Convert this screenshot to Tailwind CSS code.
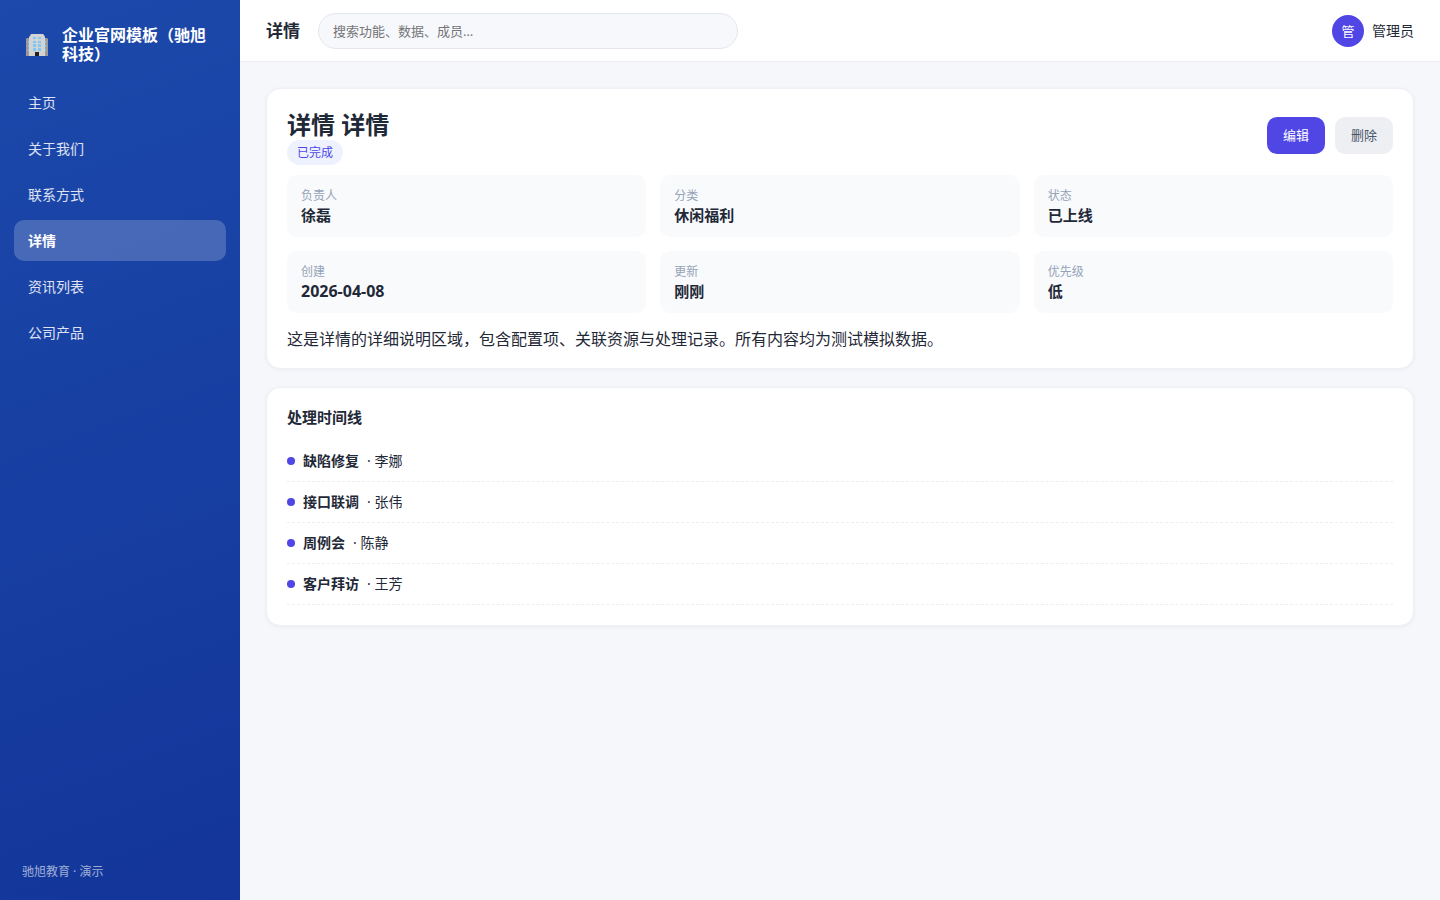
<!DOCTYPE html>
<html lang="zh-CN">
<head>
<meta charset="utf-8">
<meta name="viewport" content="width=device-width, initial-scale=1">
<title>详情</title>
<script src="https://cdn.jsdelivr.net/npm/@tailwindcss/browser@4"></script>
</head>
<body class="flex min-h-screen bg-[#f5f7fb] font-['Noto_Sans','Noto_Sans_CJK_SC',sans-serif] text-sm text-[#1f2937]">
  <aside class="flex w-60 shrink-0 flex-col bg-linear-[160deg,#1c49ab,#13359a] px-[14px] pt-[26px] pb-[18px] text-white">
    <div class="flex items-center gap-[14px] px-3">
      <svg class="size-[22px] shrink-0" viewBox="0 0 22 22" aria-hidden="true">
        <path fill="#9b9b9b" d="M0 5l1-1h20l1 1v17H0z"/>
        <path fill="#7ec8f8" d="M2 7h1v2H2zM2 11h1v2H2zM2 15h1v2H2zM19 7h1v2h-1zM19 11h1v2h-1zM19 15h1v2h-1z"/>
        <path fill="#d3d3d3" d="M3 3l1-1 1-2h12l1 1 1 2v19H3z"/>
        <path fill="#7ec8f8" d="M7 3h3v2H7zM12 3h3v2h-3zM7 7h3v2H7zM12 7h3v2h-3zM7 10h3v3H7zM12 10h3v3h-3zM7 14h3v3H7zM12 14h3v3h-3z"/>
        <path fill="#212121" d="M9 18h4v4H9z"/>
      </svg>
      <div class="text-base leading-[19px] font-bold">企业官网模板（驰旭科技）</div>
    </div>
    <nav class="mt-[18px] flex flex-col gap-[5px] leading-[21px] text-white/85">
      <a href="#" class="rounded-[10px] px-[14px] py-[10px]">主页</a>
      <a href="#" class="rounded-[10px] px-[14px] py-[10px]">关于我们</a>
      <a href="#" class="rounded-[10px] px-[14px] py-[10px]">联系方式</a>
      <a href="#" aria-current="page" class="rounded-[10px] bg-white/20 px-[14px] py-[10px] font-bold text-white">详情</a>
      <a href="#" class="rounded-[10px] px-[14px] py-[10px]">资讯列表</a>
      <a href="#" class="rounded-[10px] px-[14px] py-[10px]">公司产品</a>
    </nav>
    <div class="mt-auto px-2 text-xs leading-5 text-white/60">驰旭教育 · 演示</div>
  </aside>

  <div class="flex min-w-0 flex-1 flex-col">
    <header class="flex items-center gap-[18px] border-b border-[#eceef3] bg-white px-[26px] pt-[13px] pb-3 leading-5">
      <div class="text-[17px] font-bold">详情</div>
      <input type="search" aria-label="搜索" placeholder="搜索功能、数据、成员…" class="h-9 w-full max-w-[420px] rounded-full border border-[#e4e6ee] bg-[#f7f8fc] px-[14px] text-[13px] outline-none placeholder:text-[#757575]">
      <div class="ml-auto flex shrink-0 items-center gap-2">
        <span class="flex size-8 items-center justify-center rounded-full bg-[#4f46e5] text-[13px] text-white">管</span>
        <span>管理员</span>
      </div>
    </header>

    <main class="flex flex-col gap-[18px] p-[26px]">
      <section class="rounded-[14px] border border-[#eef0f5] bg-white px-5 pt-5 pb-[18px] shadow-[0_1px_4px_rgba(15,23,42,0.05)]">
        <div class="flex items-start justify-between">
          <div>
            <h1 class="text-2xl leading-[31px] font-bold">详情 详情</h1>
            <span class="block w-fit rounded-full bg-[#eef2ff] px-[10px] text-xs leading-[25px] text-[#4f46e5]">已完成</span>
          </div>
          <div class="flex gap-[10px] pt-2 text-[13px] leading-[21px]">
            <button type="button" class="rounded-[10px] bg-[#4f46e5] px-4 py-2 text-white">编辑</button>
            <button type="button" class="rounded-[10px] bg-[#eeeff3] px-4 py-2 text-[#475569]">删除</button>
          </div>
        </div>
        <dl class="mt-[10px] grid grid-cols-3 gap-[14px]">
          <div class="rounded-[10px] bg-[#f9fafc] px-[14px] pt-[11px] pb-3"><dt class="text-xs leading-5 text-[#94a3b8]">负责人</dt><dd class="text-[15px] leading-[19px] font-bold">徐磊</dd></div>
          <div class="rounded-[10px] bg-[#f9fafc] px-[14px] pt-[11px] pb-3"><dt class="text-xs leading-5 text-[#94a3b8]">分类</dt><dd class="text-[15px] leading-[19px] font-bold">休闲福利</dd></div>
          <div class="rounded-[10px] bg-[#f9fafc] px-[14px] pt-[11px] pb-3"><dt class="text-xs leading-5 text-[#94a3b8]">状态</dt><dd class="text-[15px] leading-[19px] font-bold">已上线</dd></div>
          <div class="rounded-[10px] bg-[#f9fafc] px-[14px] pt-[11px] pb-3"><dt class="text-xs leading-5 text-[#94a3b8]">创建</dt><dd class="text-base leading-[19px] font-bold">2026-04-08</dd></div>
          <div class="rounded-[10px] bg-[#f9fafc] px-[14px] pt-[11px] pb-3"><dt class="text-xs leading-5 text-[#94a3b8]">更新</dt><dd class="text-[15px] leading-[19px] font-bold">刚刚</dd></div>
          <div class="rounded-[10px] bg-[#f9fafc] px-[14px] pt-[11px] pb-3"><dt class="text-xs leading-5 text-[#94a3b8]">优先级</dt><dd class="text-[15px] leading-[19px] font-bold">低</dd></div>
        </dl>
        <p class="mt-4 text-base leading-[21px]">这是详情的详细说明区域，包含配置项、关联资源与处理记录。所有内容均为测试模拟数据。</p>
      </section>

      <section class="rounded-[14px] border border-[#eef0f5] bg-white p-5 shadow-[0_1px_4px_rgba(15,23,42,0.05)]">
        <h2 class="text-[15px] leading-[19px] font-bold">处理时间线</h2>
        <ul class="mt-[14px] leading-5">
          <li class="flex items-center gap-2 border-b border-dashed border-[#eceef2] py-[10px]"><span class="size-2 rounded-full bg-[#4f46e5]"></span><strong>缺陷修复</strong><span>· 李娜</span></li>
          <li class="flex items-center gap-2 border-b border-dashed border-[#eceef2] py-[10px]"><span class="size-2 rounded-full bg-[#4f46e5]"></span><strong>接口联调</strong><span>· 张伟</span></li>
          <li class="flex items-center gap-2 border-b border-dashed border-[#eceef2] py-[10px]"><span class="size-2 rounded-full bg-[#4f46e5]"></span><strong>周例会</strong><span>· 陈静</span></li>
          <li class="flex items-center gap-2 border-b border-dashed border-[#eceef2] py-[10px]"><span class="size-2 rounded-full bg-[#4f46e5]"></span><strong>客户拜访</strong><span>· 王芳</span></li>
        </ul>
      </section>
    </main>
  </div>
</body>
</html>
